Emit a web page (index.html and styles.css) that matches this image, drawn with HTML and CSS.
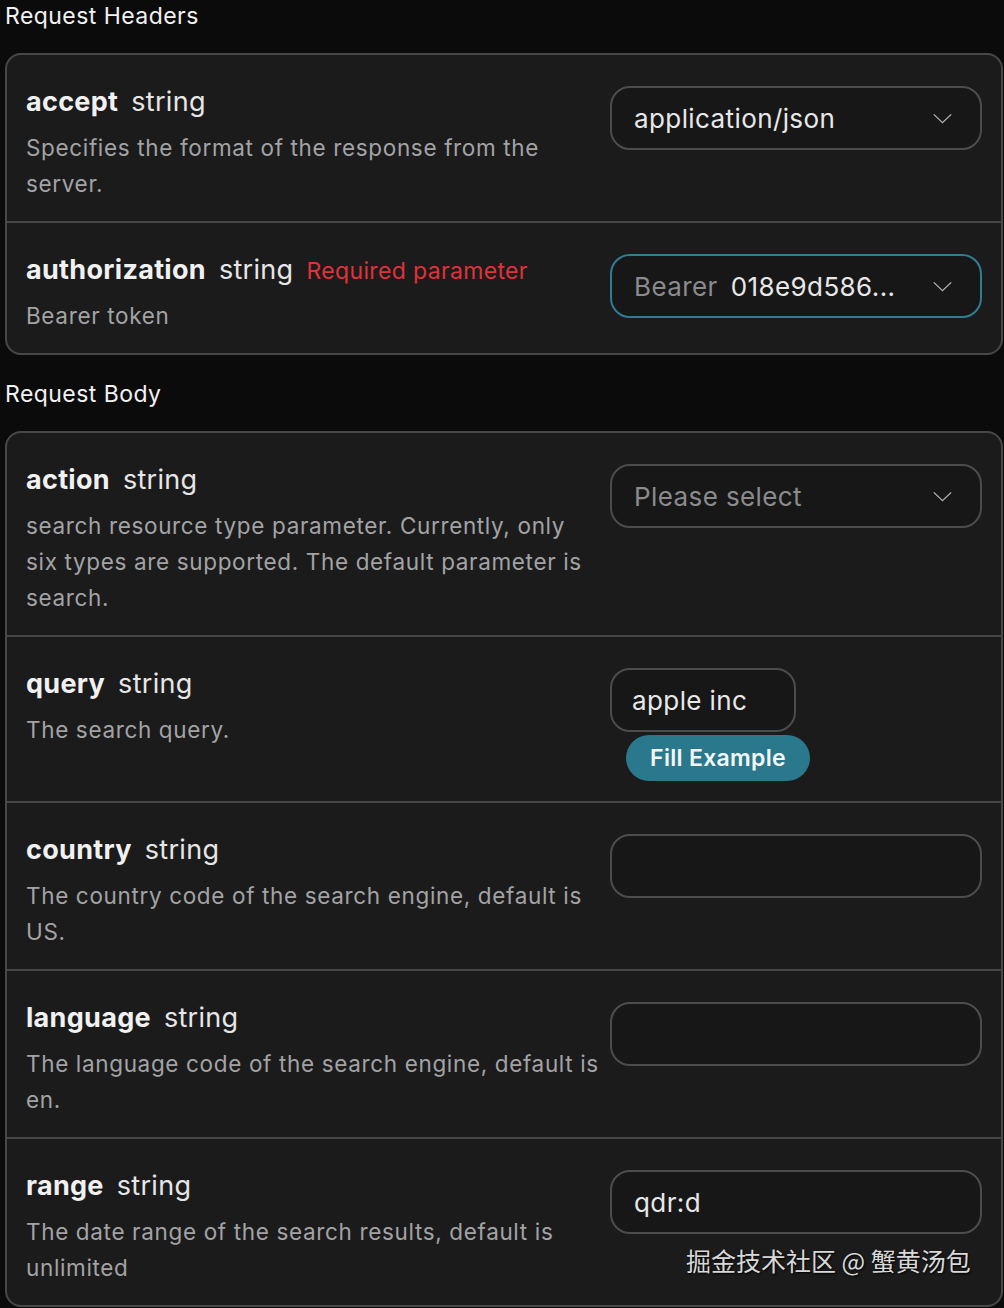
FILE: index.html
```html
<!DOCTYPE html>
<html>
<head>
<meta charset="utf-8">
<link rel="stylesheet" href="styles.css">
</head>
<body>
<div class="page">
  <div class="section-title first">Request Headers</div>
  <div class="card">
    <div class="row">
      <div class="info">
        <div class="title"><span class="name">accept</span><span class="type">string</span></div>
        <div class="desc">Specifies the format of the response from the server.</div>
      </div>
      <div class="control">
        <div class="field select"><span class="value">application/json</span><svg class="chev" viewBox="0 0 22 12"><path d="M1.5 1.5 L11 10.5 L20.5 1.5"/></svg></div>
      </div>
    </div>
    <div class="row">
      <div class="info">
        <div class="title"><span class="name">authorization</span><span class="type">string</span><span class="req">Required parameter</span></div>
        <div class="desc">Bearer token</div>
      </div>
      <div class="control">
        <div class="field select focus"><span class="prefix">Bearer</span><span class="value">018e9d586...</span><svg class="chev" viewBox="0 0 22 12"><path d="M1.5 1.5 L11 10.5 L20.5 1.5"/></svg></div>
      </div>
    </div>
  </div>

  <div class="section-title">Request Body</div>
  <div class="card">
    <div class="row">
      <div class="info">
        <div class="title"><span class="name">action</span><span class="type">string</span></div>
        <div class="desc">search resource type parameter. Currently, only six types are supported. The default parameter is search.</div>
      </div>
      <div class="control">
        <div class="field select"><span class="placeholder">Please select</span><svg class="chev" viewBox="0 0 22 12"><path d="M1.5 1.5 L11 10.5 L20.5 1.5"/></svg></div>
      </div>
    </div>
    <div class="row">
      <div class="info">
        <div class="title"><span class="name">query</span><span class="type">string</span></div>
        <div class="desc">The search query.</div>
      </div>
      <div class="control">
        <div class="field narrow"><span class="value">apple inc</span></div>
        <button class="fill">Fill Example</button>
      </div>
    </div>
    <div class="row">
      <div class="info">
        <div class="title"><span class="name">country</span><span class="type">string</span></div>
        <div class="desc">The country code of the search engine, default is US.</div>
      </div>
      <div class="control">
        <div class="field"></div>
      </div>
    </div>
    <div class="row">
      <div class="info">
        <div class="title"><span class="name">language</span><span class="type">string</span></div>
        <div class="desc">The language code of the search engine, default is en.</div>
      </div>
      <div class="control">
        <div class="field"></div>
      </div>
    </div>
    <div class="row">
      <div class="info">
        <div class="title"><span class="name">range</span><span class="type">string</span></div>
        <div class="desc">The date range of the search results, default is unlimited</div>
      </div>
      <div class="control">
        <div class="field"><span class="value">qdr:d</span></div>
        <div class="watermark">掘金技术社区 @ 蟹黄汤包</div>
      </div>
    </div>
  </div>
</div>
</body>
</html>
```

FILE: styles.css
```css
* { box-sizing: border-box; }
html, body {
  margin: 0;
  padding: 0;
  background: #0b0b0c;
}
body {
  font-family: Inter, "Noto Sans", "Noto Sans CJK SC", sans-serif;
  color: #ececec;
}
.page {
  padding-left: 5px;
  width: 1004px;
}
.section-title {
  font-size: 23px;
  letter-spacing: 0.45px;
  line-height: 32px;
  height: 32px;
  color: #f2f2f2;
  margin-top: 23px;
  margin-bottom: 21px;
}
.section-title.first {
  margin-top: 0;
}
.card {
  width: 998px;
  background: #1b1b1c;
  border: 2px solid #484848;
  border-radius: 16px;
}
.row {
  display: grid;
  grid-template-columns: 1fr 372px;
  column-gap: 10px;
  padding: 29px 19px 19px 19px;
  border-top: 2px solid #464646;
}
.row:first-child {
  border-top: none;
}
.title {
  font-size: 27px;
  letter-spacing: 0.3px;
  line-height: 36px;
  height: 36px;
  display: flex;
  align-items: baseline;
  white-space: nowrap;
}
.name {
  font-weight: 700;
  color: #f1f1f1;
  margin-right: 13px;
}
.type {
  color: #e6e6e6;
  margin-right: 13px;
}
.req {
  color: #e0323a;
  font-size: 23px;
  letter-spacing: 0.35px;
}
.desc {
  margin-top: 10px;
  font-size: 22.5px;
  letter-spacing: 0.65px;
  line-height: 36px;
  color: #a3a3a5;
}
.control {
  position: relative;
  padding-top: 2px;
}
.field {
  height: 64px;
  width: 372px;
  border: 2px solid #4c4c4c;
  border-radius: 20px;
  background: #171718;
  display: flex;
  align-items: center;
  padding: 0 27px 0 22px;
  font-size: 26px;
  letter-spacing: 0.4px;
  color: #e8e8e8;
}
.field.narrow {
  width: 186px;
  padding-left: 20px;
}
.field.focus {
  border-color: #2f7d93;
}
.select .value, .select .placeholder {
  flex: 1;
}
.prefix {
  color: #8b8b8d;
  margin-right: 13px;
}
.placeholder {
  color: #8b8b8d;
}
.chev {
  width: 21px;
  height: 11px;
  fill: none;
  stroke: #b0b0b0;
  stroke-width: 1.5;
  margin-left: 8px;
}
.fill {
  display: block;
  margin: 3px 0 1px 16px;
  height: 46px;
  width: 184px;
  border: none;
  border-radius: 23px;
  background: #2a788c;
  color: #f4f7f8;
  font-family: Inter, "Noto Sans", sans-serif;
  font-size: 23px;
  letter-spacing: 0.3px;
  font-weight: 600;
  padding: 0;
}
.watermark {
  position: absolute;
  left: 76px;
  top: 76px;
  font-family: "Noto Sans CJK SC", sans-serif;
  font-size: 25px;
  line-height: 32px;
  color: #d8d8d8;
  text-shadow: 1px 1px 2px #000;
  white-space: nowrap;
}
```
